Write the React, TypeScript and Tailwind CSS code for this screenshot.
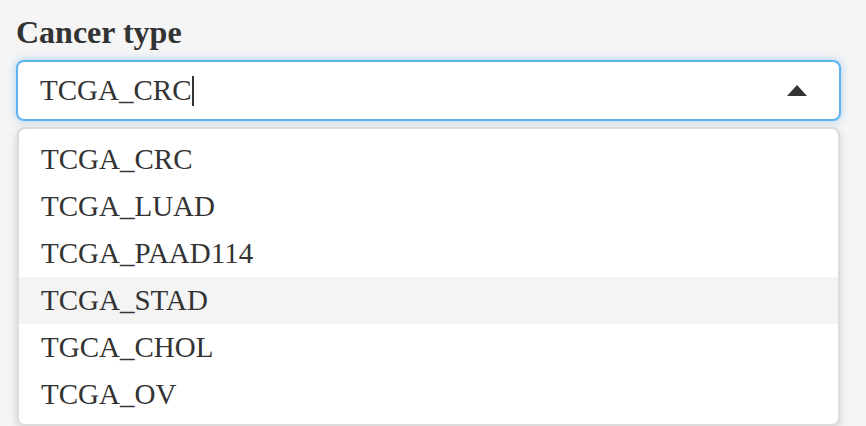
const options = [
  "TCGA_CRC",
  "TCGA_LUAD",
  "TCGA_PAAD114",
  "TCGA_STAD",
  "TGCA_CHOL",
  "TCGA_OV",
];

export default function App() {
  const active = "TCGA_STAD";

  return (
    <div
      className="min-h-screen overflow-hidden bg-[#f5f5f5] px-4 pt-[14px] text-[#333333]"
      style={{ fontFamily: '"Liberation Serif", "Times New Roman", serif' }}
    >
      <label className="mb-[10px] block text-[32px] font-bold leading-[36px]">
        Cancer type
      </label>

      {/* input */}
      <div className="flex h-[61px] w-[825px] items-center justify-between rounded-[8px] border-2 border-[#5db4ee] bg-white pl-[22px] pr-[32px] shadow-[0_0_8px_rgba(102,175,233,0.55)]">
        <div className="flex items-center text-[29px] leading-none">
          <span>TCGA_CRC</span>
          <span className="ml-[1px] h-[30px] w-[2px] bg-[#333333]" />
        </div>
        <svg width="20" height="11" viewBox="0 0 20 11">
          <polygon points="0,11 10,0 20,11" fill="#333333" />
        </svg>
      </div>

      {/* dropdown */}
      <div className="mx-[1px] mt-[6px] w-[823px] rounded-[8px] border-2 border-[#dcdcdc] bg-white pt-[7px] shadow-[0_3px_10px_rgba(0,0,0,0.15)]">
        {options.map((o) => (
          <div
            key={o}
            className={
              "flex h-[47px] items-center px-[22px] text-[29px] leading-none " +
              (o === active ? "bg-[#f4f4f4]" : "")
            }
          >
            {o}
          </div>
        ))}
        <div className="h-[6px]" />
      </div>
    </div>
  );
}
